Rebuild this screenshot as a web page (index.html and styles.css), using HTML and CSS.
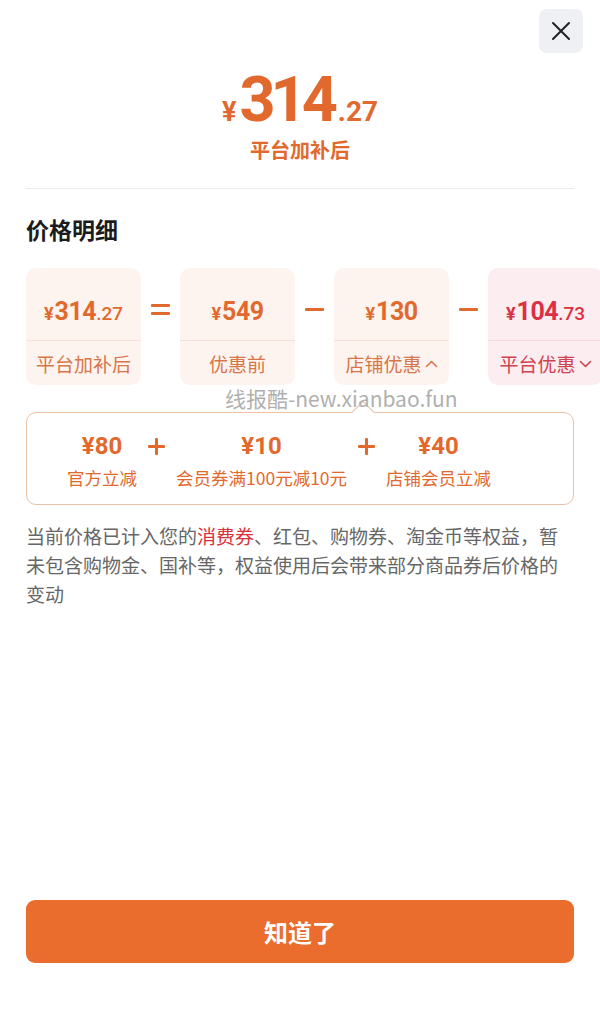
FILE: index.html
```html
<!DOCTYPE html>
<html lang="zh-CN">
<head>
  <meta charset="UTF-8" />
  <meta name="viewport" content="width=device-width, initial-scale=1.0" />
  <title>价格明细</title>
  <link rel="stylesheet" href="styles.css">
</head>
<body>
  <div class="sheet">
    <div class="topbar">
      <button class="close" aria-label="关闭">
        <svg width="20" height="20" viewBox="0 0 20 20"><path d="M2 2 L18 18 M18 2 L2 18" stroke="#222" stroke-width="2" stroke-linecap="round" fill="none"/></svg>
      </button>
    </div>

    <div class="hero">
      <div class="hero-price"><span class="yen">¥</span><span class="int">314</span><span class="dec">.27</span></div>
      <div class="hero-label">平台加补后</div>
    </div>

    <div class="divider"></div>

    <h2 class="title">价格明细</h2>

    <div class="cards">
      <div class="card">
        <div class="card-price"><span class="yen">¥</span><span class="int">314</span><span class="dec">.27</span></div>
        <div class="card-label">平台加补后</div>
      </div>
      <div class="op"><span class="bar"></span><span class="bar"></span></div>
      <div class="card">
        <div class="card-price"><span class="yen">¥</span><span class="int">549</span></div>
        <div class="card-label">优惠前</div>
      </div>
      <div class="op"><span class="bar"></span></div>
      <div class="card">
        <div class="card-price"><span class="yen">¥</span><span class="int">130</span></div>
        <div class="card-label">店铺优惠<svg class="chev" width="13" height="8" viewBox="0 0 13 8"><path d="M1.5 6.5 L6.5 1.5 L11.5 6.5" stroke="currentColor" stroke-width="1.6" fill="none" stroke-linecap="round" stroke-linejoin="round"/></svg></div>
      </div>
      <div class="op"><span class="bar"></span></div>
      <div class="card card-red">
        <div class="card-price"><span class="yen">¥</span><span class="int">104</span><span class="dec">.73</span></div>
        <div class="card-label">平台优惠<svg class="chev" width="13" height="8" viewBox="0 0 13 8"><path d="M1.5 1.5 L6.5 6.5 L11.5 1.5" stroke="currentColor" stroke-width="1.6" fill="none" stroke-linecap="round" stroke-linejoin="round"/></svg></div>
      </div>
    </div>

    <div class="subbox">
      <div class="sub-item">
        <div class="sub-price">¥80</div>
        <div class="sub-label">官方立减</div>
      </div>
      <div class="plus"></div>
      <div class="sub-item">
        <div class="sub-price">¥10</div>
        <div class="sub-label">会员券满100元减10元</div>
      </div>
      <div class="plus"></div>
      <div class="sub-item">
        <div class="sub-price">¥40</div>
        <div class="sub-label">店铺会员立减</div>
      </div>
    </div>

    <p class="note">当前价格已计入您的<span class="hl">消费券</span>、红包、购物券、淘金币等权益，暂未包含购物金、国补等，权益使用后会带来部分商品券后价格的变动</p>

    <button class="ok">知道了</button>

    <div class="watermark">线报酷-new.xianbao.fun</div>
  </div>
</body>
</html>
```

FILE: styles.css
```css
:root {
  --orange: #e2692d;
  --orange-soft: #d97648;
  --red: #dc2f43;
  --red-soft: #d2414f;
  --text: #1c1c1c;
  --gray: #666;
}

body {
  margin: 0;
  background: #fff;
  font-family: "Noto Sans CJK SC", "Noto Sans", sans-serif;
  color: var(--text);
}

.sheet {
  position: relative;
  display: flex;
  flex-direction: column;
  min-height: 1036px;
  padding: 0 26px;
  box-sizing: border-box;
  overflow: hidden;
}

.topbar {
  display: flex;
  justify-content: flex-end;
  padding-top: 9px;
  margin-right: -9px;
}

.close {
  width: 44px;
  height: 44px;
  border: none;
  border-radius: 8px;
  background: #eff0f3;
  display: flex;
  align-items: center;
  justify-content: center;
  padding: 0;
}

/* big price */
.hero {
  text-align: center;
  margin-top: 15px;
}

.hero-price {
  font-family: Roboto, "Liberation Sans", sans-serif;
  font-weight: 700;
  color: var(--orange);
  font-size: 63px;
  line-height: 1;
  height: 63px;
}

.hero-price .yen {
  font-size: 27px;
  margin-right: 3px;
}

.hero-price .int {
  letter-spacing: -5px;
}

.hero-price .dec {
  font-size: 28px;
  margin-left: 5px;
}

.hero-label {
  margin-top: 5px;
  font-size: 20px;
  line-height: 28px;
  font-weight: 700;
  color: var(--orange);
}

.divider {
  margin-top: 24px;
  height: 1px;
  background: #ebebeb;
}

.title {
  margin: 25px 0 0;
  font-size: 23px;
  line-height: 30px;
  font-weight: 700;
}

/* breakdown cards */
.cards {
  display: flex;
  align-items: flex-start;
  margin-top: 24px;
  margin-right: -60px;
}

.card {
  flex-shrink: 0;
  width: 115px;
  border-radius: 10px;
  background: #fdf4f0;
  color: var(--orange);
}

.card-price {
  font-family: Roboto, "Liberation Sans", sans-serif;
  font-weight: 700;
  font-size: 25px;
  line-height: 1;
  height: 25px;
  padding: 31px 0 16px;
  text-align: center;
  border-bottom: 1px solid #f5e1d8;
}

.card-price .yen {
  font-size: 18px;
  margin-right: 1px;
}

.card-price .int {
  letter-spacing: -0.5px;
}

.card-price .dec {
  font-size: 19px;
  font-weight: 500;
}

.card-label {
  height: 44px;
  display: flex;
  align-items: center;
  justify-content: center;
  gap: 3px;
  font-size: 19px;
  color: var(--orange-soft);
}

.chev {
  margin-top: 2px;
}

.card-red {
  background: #fcedf0;
  color: var(--red);
}

.card-red .card-price {
  border-bottom-color: #f4dce1;
}

.card-red .card-label {
  color: var(--red-soft);
}

.op {
  flex-shrink: 0;
  width: 39px;
  height: 82px;
  display: flex;
  flex-direction: column;
  align-items: center;
  justify-content: center;
  gap: 5px;
}

.op .bar {
  display: block;
  width: 19px;
  height: 3px;
  border-radius: 1px;
  background: var(--orange);
}

/* sub breakdown */
.subbox {
  position: relative;
  margin-top: 27px;
  display: flex;
  align-items: flex-start;
  gap: 11px;
  padding: 19px 0 14px 40px;
  border: 1px solid #ecc1a6;
  border-radius: 10px;
}

.subbox::before {
  content: "";
  position: absolute;
  left: 328px;
  top: -9px;
  width: 15px;
  height: 15px;
  background: #fff;
  border-top: 1px solid #ecc1a6;
  border-left: 1px solid #ecc1a6;
  transform: rotate(45deg);
}

.sub-item {
  display: flex;
  flex-direction: column;
  align-items: center;
}

.sub-price {
  font-family: Roboto, "Liberation Sans", sans-serif;
  font-weight: 700;
  font-size: 24px;
  line-height: 28px;
  color: var(--orange);
}

.sub-label {
  margin-top: 6px;
  font-size: 17.5px;
  line-height: 24px;
  color: var(--orange);
}

.plus {
  position: relative;
  width: 17px;
  height: 28px;
}

.plus::before,
.plus::after {
  content: "";
  position: absolute;
  background: var(--orange);
  border-radius: 1px;
}

.plus::before {
  left: 0;
  top: 12.5px;
  width: 17px;
  height: 3px;
}

.plus::after {
  left: 7px;
  top: 6px;
  width: 3px;
  height: 17px;
}

.note {
  margin: 16px 0 0;
  font-size: 19px;
  line-height: 29px;
  color: var(--gray);
}

.note .hl {
  color: #d8313c;
}

.ok {
  margin-top: auto;
  margin-bottom: 73px;
  height: 63px;
  border: none;
  border-radius: 9px;
  background: #ea6d2e;
  color: #fff;
  font-family: inherit;
  font-size: 24px;
  font-weight: 700;
}

.watermark {
  position: absolute;
  left: 225px;
  top: 385px;
  font-size: 21px;
  line-height: 26px;
  color: #b0b0b0;
  white-space: nowrap;
}
```
